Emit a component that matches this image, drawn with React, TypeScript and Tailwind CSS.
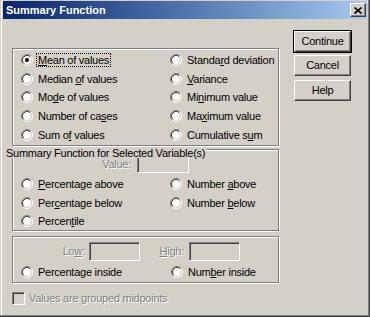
import React from "react";

function Radio({ checked }: { checked?: boolean }) {
  return (
    <svg width="12" height="12" viewBox="0 0 12 12" className="shrink-0 block">
      <circle cx="6" cy="6" r="4.2" fill="#ffffff" />
      <path d="M2.11 9.89 A5.5 5.5 0 0 1 9.89 2.11" fill="none" stroke="#808080" />
      <path d="M9.89 2.11 A5.5 5.5 0 0 1 2.11 9.89" fill="none" stroke="#ffffff" />
      <path d="M2.82 9.18 A4.5 4.5 0 0 1 9.18 2.82" fill="none" stroke="#404040" />
      <path d="M9.18 2.82 A4.5 4.5 0 0 1 2.82 9.18" fill="none" stroke="#d4d0c8" />
      {checked && <circle cx="6" cy="6" r="2" fill="#000000" />}
    </svg>
  );
}

function U({ children }: { children: React.ReactNode }) {
  return <span className="underline underline-offset-[1px]">{children}</span>;
}

function Opt({ children, checked, focus }: { children: React.ReactNode; checked?: boolean; focus?: boolean }) {
  return (
    <div className="flex items-center h-[18.6px] whitespace-nowrap">
      <Radio checked={checked} />
      <span
        className={
          focus
            ? "ml-[4px] px-[1px] leading-[12px] outline outline-1 outline-dotted outline-black"
            : "ml-[5px] leading-[12px]"
        }
      >
        {children}
      </span>
    </div>
  );
}

const editCls =
  "border border-t-[#808080] border-l-[#808080] border-b-white border-r-white shadow-[inset_1px_1px_0_#404040,inset_-1px_-1px_0_#d4d0c8] bg-[#d4d0c8]";

const btnCls =
  "flex items-center justify-center border border-t-white border-l-white border-b-[#404040] border-r-[#404040] shadow-[inset_-1px_-1px_0_#808080] bg-[#d4d0c8] text-black";

const groupCls = "relative border border-[#808080] shadow-[inset_1px_1px_0_#fff,1px_1px_0_#fff]";

const disabledCls = "text-[#808080] [text-shadow:1px_1px_0_#ffffff] whitespace-nowrap";

export default function App() {
  return (
    <div
      className="relative w-[370px] h-[317px] bg-[#d4d0c8] overflow-hidden text-[11px] tracking-[-0.25px] text-black shadow-[inset_-1px_-1px_0_#404040,inset_-2px_-2px_0_#808080,inset_1px_1px_0_#d4d0c8,inset_2px_2px_0_#ffffff]"
      style={{ fontFamily: '"Liberation Sans", Arial, sans-serif' }}
    >
      {/* Title bar */}
      <div className="ml-[3px] mt-[1px] w-[364px] h-[18px] flex items-center bg-gradient-to-r from-[#0a246a] to-[#a6caf0]">
        <span className="ml-[3px] text-white font-bold text-[11px] tracking-normal leading-[18px] whitespace-nowrap">
          Summary Function
        </span>
        <div className={btnCls + " ml-auto mr-[1px] w-[16px] h-[14px]"}>
          <svg width="8" height="7" viewBox="0 0 8 7" className="block">
            <path d="M0.5 0.5 L7.5 6.5 M7.5 0.5 L0.5 6.5" stroke="#000" strokeWidth="1.6" fill="none" />
          </svg>
        </div>
      </div>

      <div className="flex items-start">
        {/* Left column */}
        <div className="ml-[12px] mt-[29px] w-[267px] flex flex-col">
          {/* Group 1 */}
          <div className={groupCls + " h-[98px] pt-[2px] pl-[8px]"}>
            <div className="grid grid-cols-[149px_1fr]">
              <div className="flex flex-col">
                <Opt checked focus>
                  <U>M</U>ean of values
                </Opt>
                <Opt>
                  Median <U>o</U>f values
                </Opt>
                <Opt>
                  Mo<U>d</U>e of values
                </Opt>
                <Opt>
                  Number of ca<U>s</U>es
                </Opt>
                <Opt>
                  Sum o<U>f</U> values
                </Opt>
              </div>
              <div className="flex flex-col">
                <Opt>
                  Standa<U>r</U>d deviation
                </Opt>
                <Opt>
                  <U>V</U>ariance
                </Opt>
                <Opt>
                  Mi<U>n</U>imum value
                </Opt>
                <Opt>
                  Ma<U>x</U>imum value
                </Opt>
                <Opt>
                  Cumulative s<U>u</U>m
                </Opt>
              </div>
            </div>
          </div>

          {/* Group 2 */}
          <div className={groupCls + " mt-[3px] h-[82px] pt-[6px]"}>
            <div className="absolute left-[-8px] top-[-2px] h-[10px] leading-[10px] bg-[#d4d0c8] pl-[1px] pr-[2px] whitespace-nowrap">
              Summary Function for Selected Variable(s)
            </div>
            <div className="flex items-center h-[17px]">
              <div className={"w-[124px] flex justify-end pr-[6px] " + disabledCls}>Value:</div>
              <div className={editCls + " w-[52px] h-[17px]"} />
            </div>
            <div className="mt-[2px] pl-[8px] grid grid-cols-[149px_1fr]">
              <div className="flex flex-col">
                <Opt>
                  <U>P</U>ercentage above
                </Opt>
                <Opt>
                  Per<U>c</U>entage below
                </Opt>
                <Opt>
                  Percen<U>t</U>ile
                </Opt>
              </div>
              <div className="flex flex-col">
                <Opt>
                  Number <U>a</U>bove
                </Opt>
                <Opt>
                  Number <U>b</U>elow
                </Opt>
              </div>
            </div>
          </div>

          {/* Group 3 */}
          <div className={groupCls + " mt-[5px] h-[47px] pt-[5px]"}>
            <div className="flex items-center h-[19px]">
              <div className={"w-[76px] flex justify-end pr-[4px] " + disabledCls}>
                Lo<U>w</U>:
              </div>
              <div className={editCls + " w-[51px] h-[19px]"} />
              <div className={"w-[49px] flex justify-end pr-[5px] " + disabledCls}>
                <U>H</U>igh:
              </div>
              <div className={editCls + " w-[51px] h-[19px]"} />
            </div>
            <div className="mt-[2px] pl-[8px] grid grid-cols-[150px_1fr]">
              <Opt>Percentage inside</Opt>
              <Opt>
                Num<U>b</U>er inside
              </Opt>
            </div>
          </div>

          {/* Checkbox */}
          <div className="mt-[9px] flex items-center h-[13px]">
            <div className={editCls + " w-[13px] h-[13px] shrink-0"} />
            <span className={"ml-[4px] leading-[13px] " + disabledCls}>Values are grouped midpoints</span>
          </div>
        </div>

        {/* Buttons */}
        <div className="ml-[14px] mt-[11px] flex flex-col items-start">
          <div className="border border-black w-[59px] h-[23px]">
            <div className={btnCls + " w-full h-full"}>Continue</div>
          </div>
          <div className={btnCls + " mt-[2px] ml-[1px] w-[57px] h-[21px]"}>Cancel</div>
          <div className={btnCls + " mt-[4px] ml-[1px] w-[57px] h-[21px]"}>Help</div>
        </div>
      </div>
    </div>
  );
}
